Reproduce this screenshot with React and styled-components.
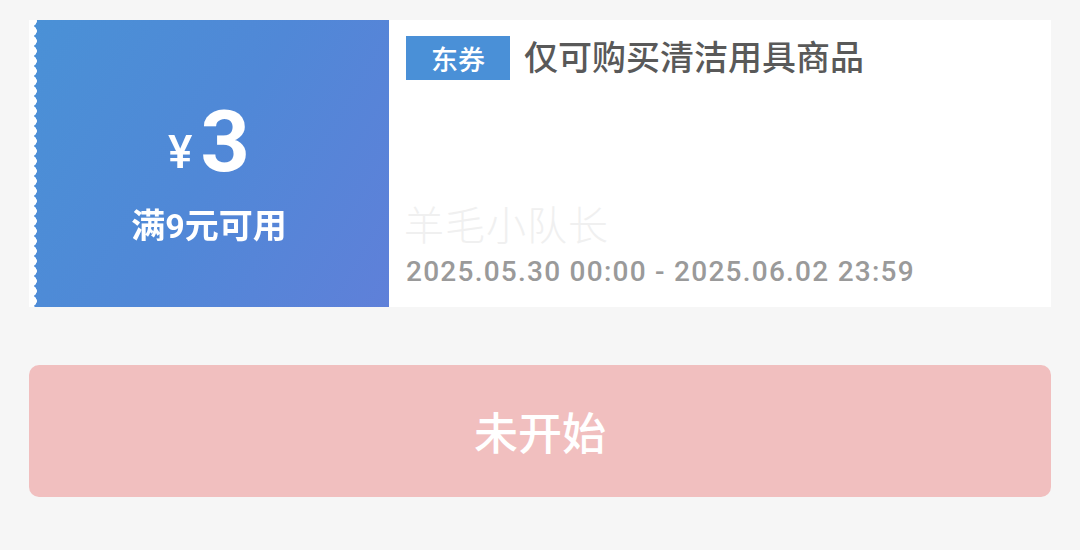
import React from "react";
import styled, { createGlobalStyle } from "styled-components";

const GlobalStyle = createGlobalStyle`
  html, body {
    margin: 0;
    padding: 0;
    background: #f6f6f6;
  }
  body {
    font-family: Roboto, "Noto Sans CJK SC", sans-serif;
  }
`;

const Page = styled.div`
  display: flex;
  flex-direction: column;
  gap: 58px;
  padding: 20px 29px 0 29px;
`;

const Coupon = styled.div`
  display: flex;
  height: 287px;
  background: #fff;
`;

// left edge is cut into small half circles, like a torn ticket stub
const ValuePanel = styled.div`
  width: 360px;
  flex-shrink: 0;
  display: flex;
  flex-direction: column;
  align-items: center;
  justify-content: center;
  padding-top: 22px;
  box-sizing: border-box;
  color: #fff;
  border-top-left-radius: 6px;
  border-bottom-left-radius: 6px;
  background: linear-gradient(120deg, #4a91d6 0%, #5088d7 50%, #5f80d9 100%);
  -webkit-mask-image: radial-gradient(circle at 2.5px 5px, transparent 5px, #000 5.6px);
  mask-image: radial-gradient(circle at 2.5px 5px, transparent 5px, #000 5.6px);
  -webkit-mask-size: 100% 10px;
  mask-size: 100% 10px;
  -webkit-mask-repeat: repeat-y;
  mask-repeat: repeat-y;
  -webkit-mask-position: 0 6px;
  mask-position: 0 6px;
`;

const Amount = styled.div`
  line-height: 1;
  white-space: nowrap;
`;

const Currency = styled.span`
  font-size: 46px;
  font-weight: 500;
  margin-right: 8px;
  vertical-align: 3px;
`;

const Number = styled.span`
  font-size: 86px;
  font-weight: 700;
`;

const Threshold = styled.div`
  font-size: 34px;
  font-weight: 700;
  line-height: 1.4;
  margin-top: 18px;
`;

const InfoPanel = styled.div`
  flex: 1;
  display: flex;
  flex-direction: column;
  padding: 16px 0 18px 17px;
  box-sizing: border-box;
`;

const TitleRow = styled.div`
  display: flex;
  align-items: center;
  gap: 14px;
`;

const Tag = styled.span`
  display: flex;
  align-items: center;
  justify-content: center;
  width: 104px;
  height: 44px;
  background: #4a90d7;
  color: #fff;
  font-size: 27px;
  font-weight: 500;
`;

const Title = styled.span`
  font-size: 34px;
  line-height: 44px;
  color: #595959;
  font-weight: 500;
`;

const Bottom = styled.div`
  margin-top: auto;
  display: flex;
  flex-direction: column;
`;

const Watermark = styled.div`
  font-size: 40px;
  font-weight: 300;
  color: #f0f0f0;
  line-height: 1;
  margin-bottom: 8px;
  margin-left: -2px;
  letter-spacing: 1px;
`;

const Period = styled.div`
  font-size: 28px;
  color: #9a9a9a;
  font-weight: 500;
  letter-spacing: 1.25px;
  line-height: 1.2;
`;

const StatusButton = styled.button`
  height: 132px;
  border: none;
  border-radius: 10px;
  background: #f1bfbf;
  color: #fff;
  font-family: inherit;
  font-size: 44px;
  font-weight: 500;
`;

export default function App() {
  return (
    <>
      <GlobalStyle />
      <Page>
        <Coupon>
          <ValuePanel>
            <Amount>
              <Currency>¥</Currency>
              <Number>3</Number>
            </Amount>
            <Threshold>满9元可用</Threshold>
          </ValuePanel>
          <InfoPanel>
            <TitleRow>
              <Tag>东券</Tag>
              <Title>仅可购买清洁用具商品</Title>
            </TitleRow>
            <Bottom>
              <Watermark>羊毛小队长</Watermark>
              <Period>2025.05.30 00:00 - 2025.06.02 23:59</Period>
            </Bottom>
          </InfoPanel>
        </Coupon>
        <StatusButton>未开始</StatusButton>
      </Page>
    </>
  );
}
